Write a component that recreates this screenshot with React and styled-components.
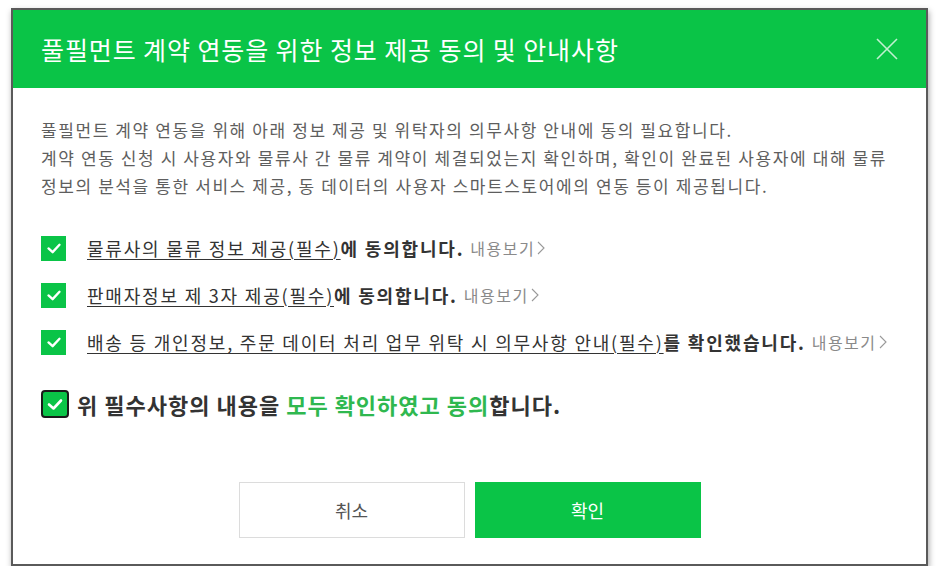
import React from "react";
import styled, { createGlobalStyle } from "styled-components";

const GlobalStyle = createGlobalStyle`
  html, body {
    margin: 0;
    padding: 0;
    background: #fff;
  }
  body {
    font-family: "Noto Sans CJK KR", "Noto Sans", sans-serif;
  }
`;

const agreements = [
  { link: "물류사의 물류 정보 제공(필수)", rest: "에 동의합니다." },
  { link: "판매자정보 제 3자 제공(필수)", rest: "에 동의합니다." },
  {
    link: "배송 등 개인정보, 주문 데이터 처리 업무 위탁 시 의무사항 안내(필수)",
    rest: "를 확인했습니다.",
  },
];

const CheckMark = ({ size }) => (
  <svg width={size} height={size} viewBox="0 0 24 24" fill="none">
    <polyline
      points="6,12.5 10.5,16.5 18,8.5"
      stroke="#fff"
      strokeWidth="2.6"
      strokeLinecap="round"
      strokeLinejoin="round"
    />
  </svg>
);

const App = () => {
  return (
    <Page>
      <GlobalStyle />
      <Modal>
        <Header>
          <Title>풀필먼트 계약 연동을 위한 정보 제공 동의 및 안내사항</Title>
          <CloseBtn aria-label="닫기">
            <svg width="24" height="24" viewBox="0 0 24 24">
              <path
                d="M2 2 L22 22 M22 2 L2 22"
                stroke="rgba(255,255,255,0.75)"
                strokeWidth="1.6"
              />
            </svg>
          </CloseBtn>
        </Header>

        <Body>
          <Intro>
            풀필먼트 계약 연동을 위해 아래 정보 제공 및 위탁자의 의무사항 안내에 동의 필요합니다.
            <br />
            계약 연동 신청 시 사용자와 물류사 간 물류 계약이 체결되었는지 확인하며, 확인이 완료된 사용자에 대해 물류
            <br />
            정보의 분석을 통한 서비스 제공, 동 데이터의 사용자 스마트스토어에의 연동 등이 제공됩니다.
          </Intro>

          <List>
            {agreements.map((item, i) => (
              <Row key={i}>
                <Box>
                  <CheckMark size={22} />
                </Box>
                <Label>
                  <Under>{item.link}</Under>
                  <Strong>{item.rest}</Strong>
                  <More>
                    내용보기
                    <svg width="8" height="14" viewBox="0 0 8 14">
                      <path d="M1 1 L7 7 L1 13" stroke="#999" strokeWidth="1.1" fill="none" />
                    </svg>
                  </More>
                </Label>
              </Row>
            ))}
          </List>

          <AllRow>
            <AllBox>
              <CheckMark size={24} />
            </AllBox>
            <AllText>
              위 필수사항의 내용을 <Green>모두 확인하였고 동의</Green>합니다.
            </AllText>
          </AllRow>

          <Buttons>
            <Button>취소</Button>
            <Button primary>확인</Button>
          </Buttons>
        </Body>
      </Modal>
    </Page>
  );
};

const Page = styled.div`
  padding: 8px 0 0 11px;
`;

const Modal = styled.div`
  width: 913px;
  height: 554px;
  border: 2px solid #5a5a5a;
  background: #fff;
  box-shadow: 1px 3px 6px rgba(0, 0, 0, 0.35);
  display: flex;
  flex-direction: column;
`;

const Header = styled.div`
  height: 78px;
  background: #0ac447;
  display: flex;
  align-items: center;
  justify-content: space-between;
  padding: 0 27px 0 28px;
`;

const Title = styled.h1`
  margin: 0;
  color: #fff;
  font-size: 25px;
  font-weight: 400;
  letter-spacing: 0.9px;
`;

const CloseBtn = styled.div`
  width: 24px;
  height: 24px;
  display: flex;
`;

const Body = styled.div`
  flex: 1;
  padding: 28px 28px 26px 28px;
  display: flex;
  flex-direction: column;
`;

const Intro = styled.p`
  margin: 0;
  color: #5e5e5e;
  font-size: 17px;
  line-height: 28px;
  letter-spacing: 1.6px;
`;

const List = styled.div`
  margin-top: 35px;
  display: flex;
  flex-direction: column;
  gap: 21px;
`;

const Row = styled.div`
  display: flex;
  align-items: center;
  gap: 21px;
`;

const Box = styled.div`
  width: 25px;
  height: 25px;
  background: #0ac447;
  display: flex;
  align-items: center;
  justify-content: center;
`;

const Label = styled.div`
  font-size: 18px;
  color: #333;
  letter-spacing: 1.8px;
  display: flex;
  align-items: center;
`;

const Under = styled.span`
  text-decoration: underline;
  text-underline-offset: 3px;
`;

const Strong = styled.span`
  font-weight: 700;
`;

const More = styled.span`
  margin-left: 6px;
  font-size: 16px;
  color: #8a8a8a;
  letter-spacing: 1.5px;
  display: inline-flex;
  align-items: center;
  gap: 2px;
`;

const AllRow = styled.div`
  margin-top: 33px;
  display: flex;
  align-items: center;
  gap: 8px;
`;

const AllBox = styled.div`
  width: 24px;
  height: 24px;
  background: #0ac447;
  border: 2px solid #1a1a1a;
  border-radius: 4px;
  display: flex;
  align-items: center;
  justify-content: center;
`;

const AllText = styled.div`
  font-size: 22px;
  font-weight: 700;
  color: #333;
  letter-spacing: 1px;
`;

const Green = styled.span`
  color: #2fb84f;
`;

const Buttons = styled.div`
  margin-top: auto;
  display: flex;
  justify-content: center;
  gap: 10px;
`;

const Button = styled.div`
  width: 226px;
  height: 56px;
  box-sizing: border-box;
  display: flex;
  align-items: center;
  justify-content: center;
  font-size: 18px;
  color: ${(p) => (p.primary ? "#fff" : "#555")};
  background: ${(p) => (p.primary ? "#0ac447" : "#fff")};
  border: 1px solid ${(p) => (p.primary ? "#0ac447" : "#dcdcdc")};
`;

export default App;
